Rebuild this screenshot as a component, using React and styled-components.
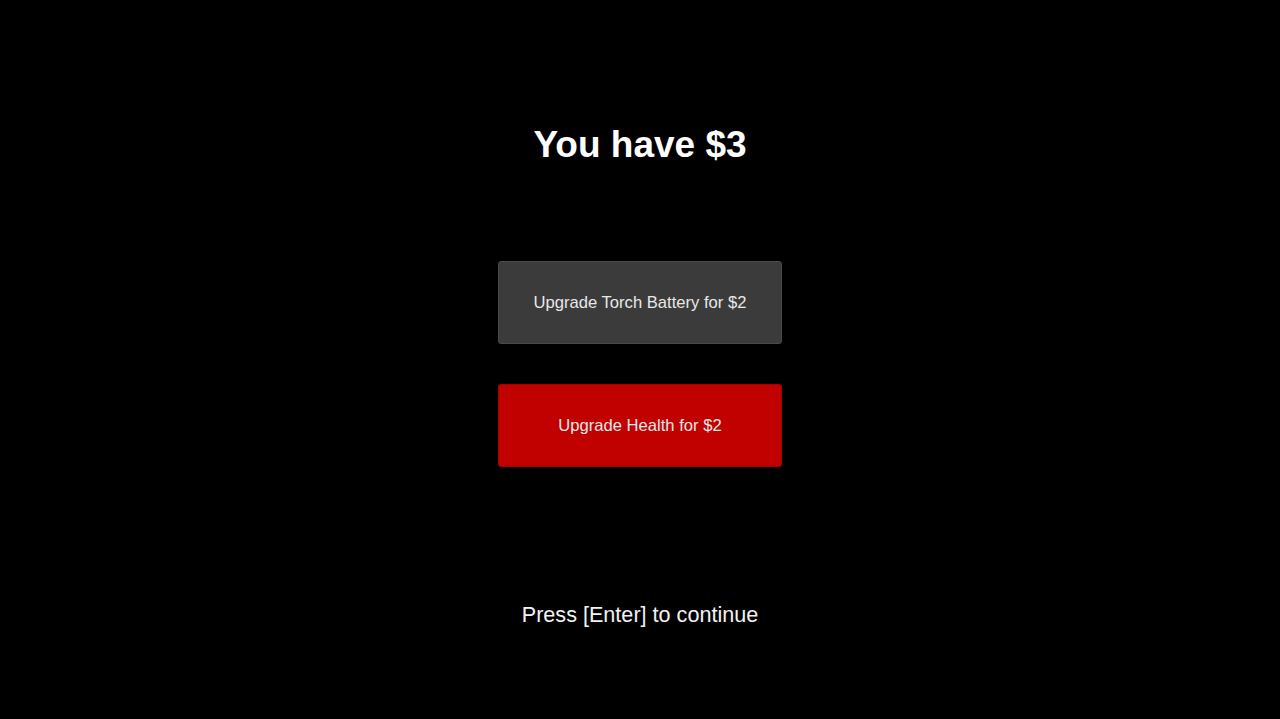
import React from "react";
import styled, { createGlobalStyle } from "styled-components";

const GlobalStyle = createGlobalStyle`
  html, body {
    margin: 0;
    padding: 0;
    background: #000;
  }
  body {
    font-family: "Liberation Sans", Arial, sans-serif;
  }
`;

const upgrades = [
  { id: "torch", label: "Upgrade Torch Battery for $2", tone: "gray" },
  { id: "health", label: "Upgrade Health for $2", tone: "red" },
];

function App() {
  return (
    <>
      <GlobalStyle />
      <Screen>
        <Title>You have $3</Title>
        <UpgradeList>
          {upgrades.map((u) => (
            <UpgradeButton key={u.id} tone={u.tone}>
              {u.label}
            </UpgradeButton>
          ))}
        </UpgradeList>
        <Hint>Press [Enter] to continue</Hint>
      </Screen>
    </>
  );
}

export default App;

const Screen = styled.div`
  width: 100%;
  height: 719px;
  background: #000;
  color: #fff;
  display: flex;
  flex-direction: column;
  align-items: center;
  padding-top: 123px;
  box-sizing: border-box;
`;

const Title = styled.h1`
  margin: 0;
  font-size: 37px;
  font-weight: bold;
  line-height: 44px;
  color: #fff;
`;

const UpgradeList = styled.div`
  display: flex;
  flex-direction: column;
  gap: 40px;
  margin-top: 94px;
`;

const UpgradeButton = styled.button`
  width: 284px;
  height: 83px;
  border-radius: 3px;
  border: 1px solid ${(p) => (p.tone === "red" ? "#a80000" : "#4a4a4a")};
  background: ${(p) => (p.tone === "red" ? "#c10000" : "#3b3b3b")};
  color: #e8e8e8;
  font-family: "Liberation Sans", Arial, sans-serif;
  font-size: 16.6px;
  cursor: pointer;
`;

const Hint = styled.p`
  margin: 134px 0 0;
  font-size: 21.6px;
  line-height: 28px;
  color: #f2f2f2;
`;
